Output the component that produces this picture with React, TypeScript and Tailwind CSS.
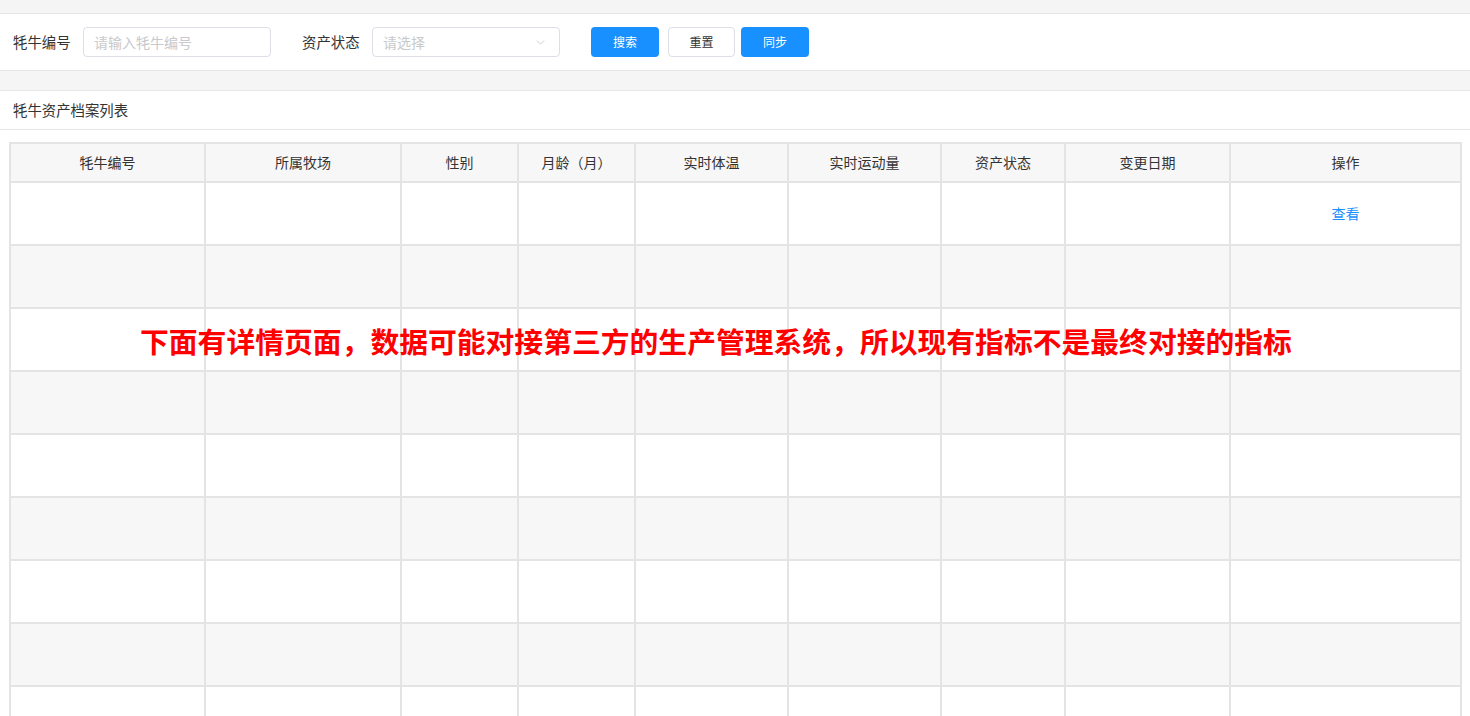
import React from "react";
import { ChevronDown } from "lucide-react";

const font = { fontFamily: '"Noto Sans CJK SC", "Noto Sans", sans-serif' };

const cols = [
  { t: "牦牛编号", w: "w-[195px]" },
  { t: "所属牧场", w: "w-[196px]" },
  { t: "性别", w: "w-[117px]" },
  { t: "月龄（月）", w: "w-[117px]" },
  { t: "实时体温", w: "w-[153px]" },
  { t: "实时运动量", w: "w-[153px]" },
  { t: "资产状态", w: "w-[124px]" },
  { t: "变更日期", w: "w-[165px]" },
  { t: "操作", w: "w-[231px]" },
];

export default function App() {
  const rows = Array.from({ length: 9 }, (_, i) => i);
  return (
    <div className="w-[1470px] h-[716px] overflow-hidden bg-white text-[#333]" style={font}>
      <div className="h-[14px] bg-[#f5f5f5] border-b border-[#e6e6e6]" />
      <div className="h-[57px] flex items-center pl-[13px] border-b border-[#e6e6e6] bg-white">
        <span className="w-[56px] text-[14.4px] text-[#333] whitespace-nowrap">牦牛编号</span>
        <div className="ml-[14px] w-[188px] h-[30px] border border-[#dcdfe6] rounded-[4px] flex items-center px-[10px] text-[14px] text-[#c8c9cc]">
          请输入牦牛编号
        </div>
        <span className="ml-[31px] w-[56px] text-[14.4px] text-[#333] whitespace-nowrap">资产状态</span>
        <div className="ml-[14px] w-[188px] h-[30px] border border-[#dcdfe6] rounded-[4px] flex items-center justify-between pl-[10px] pr-[12px] text-[14px] text-[#c8c9cc]">
          <span>请选择</span>
          <ChevronDown size={13} strokeWidth={1.5} className="text-[#c0c4cc]" />
        </div>
        <button className="ml-[31px] w-[68px] h-[30px] rounded-[4px] bg-[#1890ff] text-white text-[12px]">搜索</button>
        <button className="ml-[9px] w-[67px] h-[30px] rounded-[4px] bg-white border border-[#dcdfe6] text-[#333] text-[12px]">重置</button>
        <button className="ml-[6px] w-[68px] h-[30px] rounded-[4px] bg-[#1890ff] text-white text-[12px]">同步</button>
      </div>
      <div className="h-[20px] bg-[#f5f5f5] border-b border-[#e6e6e6]" />
      <div className="h-[39px] flex items-center pl-[13px] border-b border-[#e6e6e6] text-[14.4px] text-[#333]">
        牦牛资产档案列表
      </div>
      <div className="relative pt-[12px] pl-[9px]">
        <table className="w-[1451px] border-collapse table-fixed">
          <colgroup>
            {cols.map((c) => (
              <col key={c.t} className={c.w} />
            ))}
          </colgroup>
          <thead>
            <tr className="h-[39px] bg-[#f7f7f7]">
              {cols.map((c) => (
                <th key={c.t} className="border-2 border-[#e4e4e4] font-normal text-[14px] text-[#333]">
                  {c.t}
                </th>
              ))}
            </tr>
          </thead>
          <tbody>
            {rows.map((r) => (
              <tr key={r} className={r % 2 === 0 ? "h-[63px] bg-white" : "h-[63px] bg-[#f7f7f7]"}>
                {cols.map((c, ci) => (
                  <td key={c.t} className="border-2 border-[#e4e4e4] text-center text-[14px]">
                    {r === 0 && ci === 8 ? <span className="text-[#1890ff]">查看</span> : null}
                  </td>
                ))}
              </tr>
            ))}
          </tbody>
        </table>
        <div className="absolute left-[140px] top-[191px] text-[28.8px] font-bold text-[#ff0000] whitespace-nowrap leading-[40px]">
          下面有详情页面，数据可能对接第三方的生产管理系统，所以现有指标不是最终对接的指标
        </div>
      </div>
    </div>
  );
}
